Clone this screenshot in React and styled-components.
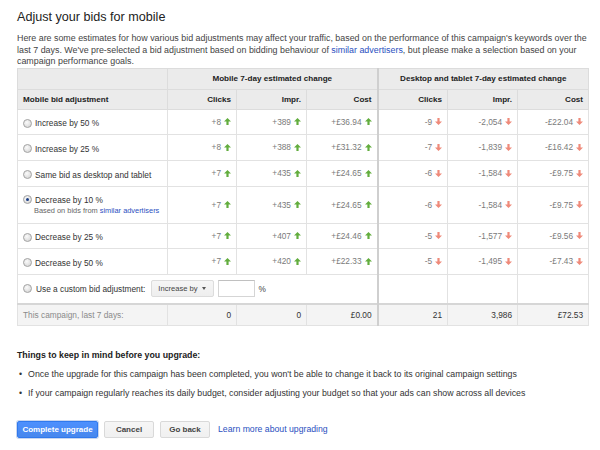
import React from 'react';
import styled, { createGlobalStyle } from 'styled-components';

const Global = createGlobalStyle`
  html, body { margin: 0; padding: 0; background: #fff; }
  body { font-family: "Liberation Sans", Arial, sans-serif; color: #222; }
`;

const Page = styled.div`
  width: 600px;
  height: 450px;
  box-sizing: border-box;
  padding: 9px 10px 0 17px;
  overflow: hidden;
`;

const Title = styled.h1`
  margin: 0;
  font-size: 12.6px;
  line-height: 16px;
  font-weight: normal;
  color: #222;
`;

const Intro = styled.p`
  margin: 8px 0 0;
  font-size: 8.9px;
  line-height: 11.5px;
  color: #444;
`;

const Link = styled.a`
  color: #2a4fc0;
  text-decoration: none;
`;

const Table = styled.table`
  border-collapse: collapse;
  table-layout: fixed;
  width: 571px;
  font-size: 8.3px;
  border: 1px solid #e2e2e2;
`;

const Th = styled.th`
  background: #ebebeb;
  border: 1px solid #dcdcdc;
  border-left: ${p => (p.$sep ? '2px solid #cfcfcf' : '1px solid #dcdcdc')};
  font-weight: bold;
  font-size: 8.1px;
  color: #222;
  text-align: ${p => p.$align || 'right'};
  padding: 0 5px;
  height: ${p => p.$h}px;
  box-sizing: border-box;
`;

const Tr = styled.tr`
  height: ${p => p.$h}px;
`;

const Td = styled.td`
  border: 1px solid #e2e2e2;
  border-left: ${p => (p.$sep ? '2px solid #cfcfcf' : '1px solid #e2e2e2')};
  border-top: ${p => (p.$heavyTop ? '2px solid #d6d6d6' : '1px solid #e2e2e2')};
  background: ${p => (p.$foot ? '#f4f4f4' : '#fff')};
  color: ${p => (p.$foot ? '#333' : '#7a7a7a')};
  text-align: right;
  padding: 0 5px;
  vertical-align: middle;
  white-space: nowrap;
`;

const LabelCell = styled(Td)`
  text-align: left;
  color: ${p => (p.$foot ? '#8a8a8a' : '#333')};
`;

const Choice = styled.label`
  display: flex;
  align-items: center;
  gap: 3px;
  font-size: 8.3px;
  color: #333;
  padding-top: ${p => (p.$offset ? '3px' : '0')};
`;

const Radio = styled.span`
  display: inline-block;
  width: 7px;
  height: 7px;
  border-radius: 50%;
  border: 1px solid #a5a5a5;
  background: radial-gradient(circle at 40% 35%, #fafafa, #d0d0d0);
  position: relative;
  flex: none;
  &::after {
    content: '';
    display: ${p => (p.$checked ? 'block' : 'none')};
    position: absolute;
    left: 2px;
    top: 2px;
    width: 3px;
    height: 3px;
    border-radius: 50%;
    background: #1d3f86;
  }
`;

const Sub = styled.div`
  font-size: 7.4px;
  color: #666;
  margin: 1px 0 0 11px;
`;

const Num = styled.span`
  display: inline-flex;
  align-items: center;
  gap: 3px;
`;

const Custom = styled.div`
  display: flex;
  align-items: center;
  gap: 4px;
  font-size: 8.3px;
  color: #333;
`;

const Drop = styled.button`
  font-family: inherit;
  font-size: 7.6px;
  color: #444;
  height: 17px;
  padding: 0 7px 0 6px;
  margin-left: 2px;
  border: 1px solid #dcdcdc;
  border-radius: 2px;
  background: linear-gradient(#f6f6f6, #eeeeee);
  display: inline-flex;
  align-items: center;
  gap: 4px;
`;

const Caret = styled.span`
  width: 0;
  height: 0;
  border-left: 2.5px solid transparent;
  border-right: 2.5px solid transparent;
  border-top: 3px solid #555;
`;

const Input = styled.input`
  width: 37px;
  height: 17px;
  box-sizing: border-box;
  border: 1px solid #d5d5d5;
  border-top-color: #c0c0c0;
  margin: 0;
`;

const Pct = styled.span`
  color: #444;
`;

const Notes = styled.div`
  margin-top: 23px;
  font-size: 8.8px;
  color: #333;
`;

const NotesTitle = styled.div`
  font-weight: bold;
  color: #222;
  line-height: 12px;
`;

const Bullets = styled.ul`
  list-style: none;
  margin: 7px 0 0;
  padding: 0;
  display: flex;
  flex-direction: column;
  gap: 7px;
`;

const Bullet = styled.li`
  display: flex;
  gap: 6px;
  line-height: 12px;
  padding-left: 2px;
  &::before {
    content: '•';
    color: #333;
  }
`;

const Actions = styled.div`
  margin-top: 22px;
  display: flex;
  align-items: center;
  gap: 6px;
`;

const Button = styled.button`
  font-family: inherit;
  font-weight: bold;
  font-size: 8px;
  height: 17px;
  padding: 0;
  width: ${p => p.$w}px;
  border-radius: 2px;
  border: 1px solid ${p => (p.$primary ? '#3079ed' : '#d9d9d9')};
  background: ${p => (p.$primary ? 'linear-gradient(#4d90fe, #4787ed)' : 'linear-gradient(#f6f6f6, #f0f0f0)')};
  color: ${p => (p.$primary ? '#fff' : '#444')};
  box-shadow: ${p => (p.$primary ? '0 0 0 1px #c9d6ef' : 'none')};
`;

const ActionLink = styled(Link)`
  font-size: 8.7px;
  margin-left: 2px;
`;

function Arrow({ up }) {
  return (
    <svg width="7" height="7" viewBox="0 0 7 7" aria-hidden="true">
      {up ? (
        <path d="M3.5 0 L7 3.6 H4.6 V7 H2.4 V3.6 H0 Z" fill="#62ad3e" />
      ) : (
        <path d="M3.5 7 L7 3.4 H4.6 V0 H2.4 V3.4 H0 Z" fill="#ef8a7a" />
      )}
    </svg>
  );
}

const rows = [
  { label: 'Increase by 50 %', h: 25, m: ['+8', '+389', '+£36.94'], d: ['-9', '-2,054', '-£22.04'] },
  { label: 'Increase by 25 %', h: 26, m: ['+8', '+388', '+£31.32'], d: ['-7', '-1,839', '-£16.42'] },
  { label: 'Same bid as desktop and tablet', h: 26, m: ['+7', '+435', '+£24.65'], d: ['-6', '-1,584', '-£9.75'] },
  { label: 'Decrease by 10 %', h: 37, checked: true, sub: true, m: ['+7', '+435', '+£24.65'], d: ['-6', '-1,584', '-£9.75'] },
  { label: 'Decrease by 25 %', h: 25, m: ['+7', '+407', '+£24.46'], d: ['-5', '-1,577', '-£9.56'] },
  { label: 'Decrease by 50 %', h: 26, m: ['+7', '+420', '+£22.33'], d: ['-5', '-1,495', '-£7.43'] },
];

const footer = ['0', '0', '£0.00', '21', '3,986', '£72.53'];

export default function App() {
  return (
    <>
      <Global />
      <Page>
        <Title>Adjust your bids for mobile</Title>
        <Intro>
          Here are some estimates for how various bid adjustments may affect your traffic, based on the performance of this campaign's keywords over the last 7 days. We've pre-selected a bid adjustment based on bidding behaviour of{' '}
          <Link href="#">similar advertisers</Link>, but please make a selection based on your campaign performance goals.
        </Intro>
        <Table>
          <colgroup>
            <col style={{ width: 150 }} />
            <col style={{ width: 69 }} />
            <col style={{ width: 70 }} />
            <col style={{ width: 71 }} />
            <col style={{ width: 70 }} />
            <col style={{ width: 70 }} />
            <col style={{ width: 71 }} />
          </colgroup>
          <thead>
            <Tr $h={21}>
              <Th $h={21} />
              <Th $h={21} colSpan={3} $align="center">Mobile 7-day estimated change</Th>
              <Th $h={21} colSpan={3} $align="center" $sep>Desktop and tablet 7-day estimated change</Th>
            </Tr>
            <Tr $h={20}>
              <Th $h={20} $align="left">Mobile bid adjustment</Th>
              <Th $h={20}>Clicks</Th>
              <Th $h={20}>Impr.</Th>
              <Th $h={20}>Cost</Th>
              <Th $h={20} $sep>Clicks</Th>
              <Th $h={20}>Impr.</Th>
              <Th $h={20}>Cost</Th>
            </Tr>
          </thead>
          <tbody>
            {rows.map(r => (
              <Tr key={r.label} $h={r.h}>
                <LabelCell>
                  <Choice $offset={!r.sub}>
                    <Radio $checked={r.checked} />
                    {r.label}
                  </Choice>
                  {r.sub && (
                    <Sub>
                      Based on bids from <Link href="#">similar advertisers</Link>
                    </Sub>
                  )}
                </LabelCell>
                {r.m.map((v, i) => (
                  <Td key={'m' + i}>
                    <Num>{v}<Arrow up /></Num>
                  </Td>
                ))}
                {r.d.map((v, i) => (
                  <Td key={'d' + i} $sep={i === 0}>
                    <Num>{v}<Arrow /></Num>
                  </Td>
                ))}
              </Tr>
            ))}
            <Tr $h={30}>
              <LabelCell colSpan={4}>
                <Custom>
                  <Radio />
                  Use a custom bid adjustment:
                  <Drop type="button">Increase by <Caret /></Drop>
                  <Input type="text" />
                  <Pct>%</Pct>
                </Custom>
              </LabelCell>
              <Td $sep />
              <Td />
              <Td />
            </Tr>
            <Tr $h={21}>
              <LabelCell $foot $heavyTop>This campaign, last 7 days:</LabelCell>
              {footer.map((v, i) => (
                <Td key={i} $foot $heavyTop $sep={i === 3}>{v}</Td>
              ))}
            </Tr>
          </tbody>
        </Table>
        <Notes>
          <NotesTitle>Things to keep in mind before you upgrade:</NotesTitle>
          <Bullets>
            <Bullet>Once the upgrade for this campaign has been completed, you won't be able to change it back to its original campaign settings</Bullet>
            <Bullet>If your campaign regularly reaches its daily budget, consider adjusting your budget so that your ads can show across all devices</Bullet>
          </Bullets>
        </Notes>
        <Actions>
          <Button $primary $w={81}>Complete upgrade</Button>
          <Button $w={50}>Cancel</Button>
          <Button $w={50}>Go back</Button>
          <ActionLink href="#">Learn more about upgrading</ActionLink>
        </Actions>
      </Page>
    </>
  );
}
